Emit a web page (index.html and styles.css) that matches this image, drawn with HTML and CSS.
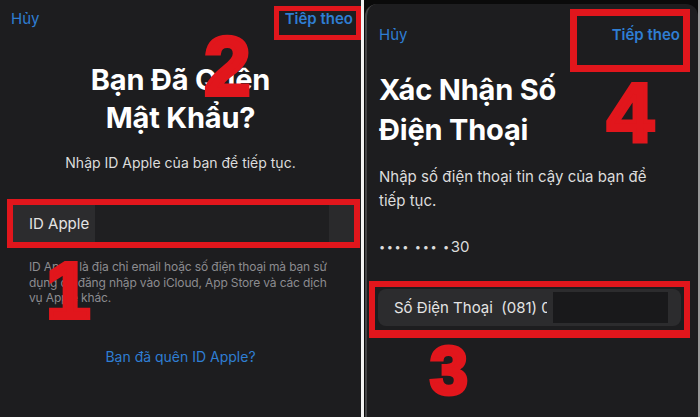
FILE: index.html
```html
<!DOCTYPE html>
<html lang="vi">
<head>
    <meta charset="UTF-8">
    <meta name="viewport" content="width=device-width, initial-scale=1.0">
    <title>Quên mật khẩu ID Apple</title>
    <link rel="stylesheet" href="styles.css">
</head>
<body>
    <div class="shots">
        <section class="screen screen-left">
            <header class="nav">
                <span class="nav-link">Hủy</span>
                <span class="nav-link nav-next">Tiếp theo</span>
            </header>
            <h1 class="title title-center">Bạn Đã Quên<br>Mật Khẩu?</h1>
            <p class="lead lead-center">Nhập ID Apple của bạn để tiếp tục.</p>
            <div class="mark-field mark-id">
                <div class="field field-id">
                    <span class="field-label">ID Apple</span>
                    <span class="field-input"></span>
                    <span class="field-end"></span>
                </div>
            </div>
            <p class="note">ID Apple là địa chỉ email hoặc số điện thoại mà bạn sử dụng để đăng nhập vào iCloud, App Store và các dịch vụ Apple khác.</p>
            <p class="link">Bạn đã quên ID Apple?</p>

            <span class="mark-box mark-next-left"></span>
            <span class="step step-1">1</span>
            <span class="step step-2">2</span>
        </section>

        <div class="divider"></div>

        <section class="screen screen-right">
            <div class="sheet">
                <header class="nav nav-sheet">
                    <span class="nav-link">Hủy</span>
                    <span class="nav-link nav-next">Tiếp theo</span>
                </header>
                <h1 class="title">Xác Nhận Số<br>Điện Thoại</h1>
                <p class="lead lead-phone">Nhập số điện thoại tin cậy của bạn để tiếp tục.</p>
                <p class="dots"><span class="dot-run">•••• ••• •</span>30</p>
                <div class="mark-field mark-phone">
                    <div class="field field-phone">
                        <span class="phone-label">Số Điện Thoại&nbsp;&nbsp;(081) 0</span>
                        <span class="redacted"></span>
                    </div>
                </div>
            </div>

            <span class="mark-box mark-next-right"></span>
            <span class="step step-3">3</span>
            <span class="step step-4">4</span>
        </section>
    </div>
</body>
</html>
```

FILE: styles.css
```css
body {
    margin: 0;
    background: #000;
    font-family: 'Inter', 'Noto Sans', sans-serif;
    color: #fff;
}

.shots {
    display: flex;
    width: 700px;
    height: 417px;
    overflow: hidden;
}

.screen {
    position: relative;
    height: 417px;
}

.screen-left {
    width: 361px;
    background: #1d1d1f;
}

.divider {
    width: 3px;
    background: #f2f2f2;
}

.screen-right {
    flex: 1;
    display: flex;
    background: #0a0a0a;
    border-right: 2px solid #9a9a9a;
}

.sheet {
    flex: 1;
    margin: 4px 0 0 1px;
    padding: 0 18px 0 12px;
    background: #1d1d1f;
    border-left: 2px solid #454547;
    border-radius: 12px 12px 0 0;
}

/* top bar */
.nav {
    display: flex;
    justify-content: space-between;
    align-items: center;
    height: 36px;
    padding: 0 8px 0 11px;
}

.nav-sheet {
    height: 60px;
    padding: 0;
}

.nav-link {
    font-size: 15px;
    color: #2f7ed3;
}

.nav-next {
    font-weight: 600;
}

.title {
    margin: 25px 0 0;
    font-size: 29px;
    line-height: 38px;
    font-weight: 700;
    letter-spacing: -0.2px;
}

.sheet .title {
    margin-top: 6px;
    line-height: 40px;
}

.title-center,
.lead-center {
    text-align: center;
}

.lead {
    margin: 16px 0 0;
    font-size: 14px;
    line-height: 20px;
    color: #dcdcdc;
}

.lead-phone {
    margin: 15px 22px 0 0;
    font-size: 15px;
    line-height: 24px;
}

.dots {
    margin: 24px 0 0;
    font-size: 15px;
    line-height: 20px;
    color: #dcdcdc;
}

.dot-run {
    font-size: 11px;
    letter-spacing: 1.6px;
    vertical-align: 1px;
}

/* red outline drawn round a field */
.mark-field {
    border: 6px solid #e1161c;
}

.mark-id {
    margin: 26px 1px 0 7px;
}

.mark-phone {
    margin: 24px -10px 0 -10px;
    padding: 2px 3px 4px;
    border-bottom-width: 8px;
}

.field {
    display: flex;
    height: 37px;
    align-items: stretch;
}

.field-label {
    display: flex;
    align-items: center;
    width: 66px;
    padding-left: 16px;
    background: #2c2c2e;
    font-size: 15px;
    color: #e4e4e4;
}

.field-input {
    flex: 1;
    background: #1f1f21;
}

.field-end {
    width: 25px;
    background: #2a2a2c;
}

.field-phone {
    align-items: center;
    background: #2c2c2e;
    border-radius: 8px;
}

.phone-label {
    flex: 0 0 153px;
    padding-left: 16px;
    overflow: hidden;
    white-space: nowrap;
    font-size: 15px;
    color: #e4e4e4;
}

.redacted {
    width: 115px;
    height: 31px;
    margin-left: auto;
    margin-right: 13px;
    background: #19191b;
}

.note {
    margin: 11px 26px 0 29px;
    font-size: 12px;
    line-height: 15.5px;
    letter-spacing: -0.15px;
    color: #8c8c90;
}

.link {
    margin: 41px 0 0;
    text-align: center;
    font-size: 14px;
    line-height: 20px;
    color: #2f7ed3;
}

/* annotations */
.mark-box {
    position: absolute;
    box-sizing: border-box;
    border: 5px solid #e1161c;
}

.mark-next-left {
    left: 274px;
    top: 6px;
    width: 87px;
    height: 34px;
}

.mark-next-right {
    left: 206px;
    top: 9px;
    width: 120px;
    height: 63px;
    border-width: 7px;
}

.step {
    position: absolute;
    font-family: 'Liberation Sans', Arial, sans-serif;
    font-weight: 700;
    line-height: 1;
    color: #e1161c;
    -webkit-text-stroke: 4px #e1161c;
}

.step-1 {
    left: 46px;
    top: 251px;
    font-size: 80px;
}

.step-2 {
    left: 204px;
    top: 24px;
    font-size: 84px;
}

.step-3 {
    left: 66px;
    top: 336px;
    font-size: 68px;
}

.step-4 {
    left: 243px;
    top: 71px;
    font-size: 84px;
}
```
